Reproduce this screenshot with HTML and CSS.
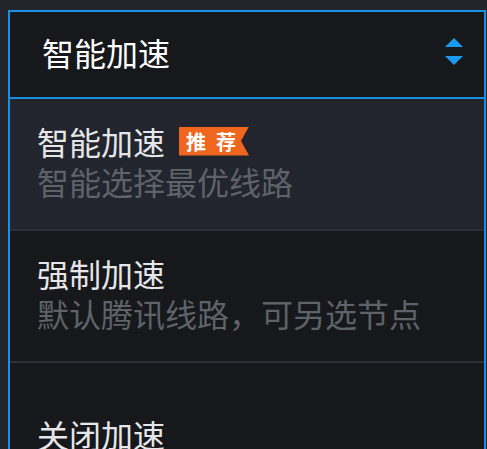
FILE: index.html
```html
<!DOCTYPE html>
<html lang="zh-CN">
<head>
<meta charset="utf-8">
<title>加速模式</title>
<link rel="stylesheet" href="styles.css">
</head>
<body>
<div class="select">
  <div class="select-head">
    <span class="select-value">智能加速</span>
    <svg class="select-arrows" width="18" height="27" viewBox="0 0 18 27" aria-hidden="true">
      <path d="M9 0 L18 9 L0 9 Z" fill="#1b9bf0"/>
      <path d="M0 18 L18 18 L9 27 Z" fill="#1b9bf0"/>
    </svg>
  </div>
  <ul class="options">
    <li class="option option--active">
      <div class="option-title">智能加速<span class="badge">推荐</span></div>
      <div class="option-desc">智能选择最优线路</div>
    </li>
    <li class="option">
      <div class="option-title">强制加速</div>
      <div class="option-desc">默认腾讯线路，可另选节点</div>
    </li>
    <li class="option option--single">
      <div class="option-title">关闭加速</div>
    </li>
  </ul>
</div>
</body>
</html>
```

FILE: styles.css
```css
html, body {
  margin: 0;
  padding: 0;
  background: #22252c;
  overflow: hidden;
}

body {
  padding: 10px 0 0 8px;
  font-family: "Noto Sans CJK SC", "Noto Sans", sans-serif;
}

.select {
  width: 478px;
  box-sizing: border-box;
  border: 2px solid #1a8fe3;
  border-bottom: none;
  background: #17181c;
}

.select-head {
  height: 79px;
  display: flex;
  align-items: center;
  justify-content: space-between;
  padding: 0 21px 6px 32px;
  border-bottom: 2px solid #1a8fe3;
  box-sizing: content-box;
}

.select-value {
  color: #ffffff;
  font-size: 32px;
  line-height: 40px;
}

.select-arrows {
  display: block;
}

.options {
  list-style: none;
  margin: 0;
  padding: 0;
}

.option {
  padding: 22px 20px 28px 27px;
  background: #17181b;
  border-bottom: 2px solid #2d3039;
}

.option--active {
  background: #22252d;
}

.option--single {
  padding-top: 51px;
}

.option-title {
  display: flex;
  align-items: center;
  color: #e6e6e8;
  font-size: 32px;
  line-height: 40px;
}

.option-desc {
  color: #5e6269;
  font-size: 32px;
  line-height: 40px;
}

.badge {
  margin-left: 14px;
  height: 29px;
  padding: 0 3px 0 7px;
  background: #f0661f;
  color: #ffffff;
  font-size: 20px;
  font-weight: bold;
  line-height: 29px;
  letter-spacing: 10px;
  clip-path: polygon(0 0, 100% 0, calc(100% - 8px) 50%, 100% 100%, 0 100%);
}
```
